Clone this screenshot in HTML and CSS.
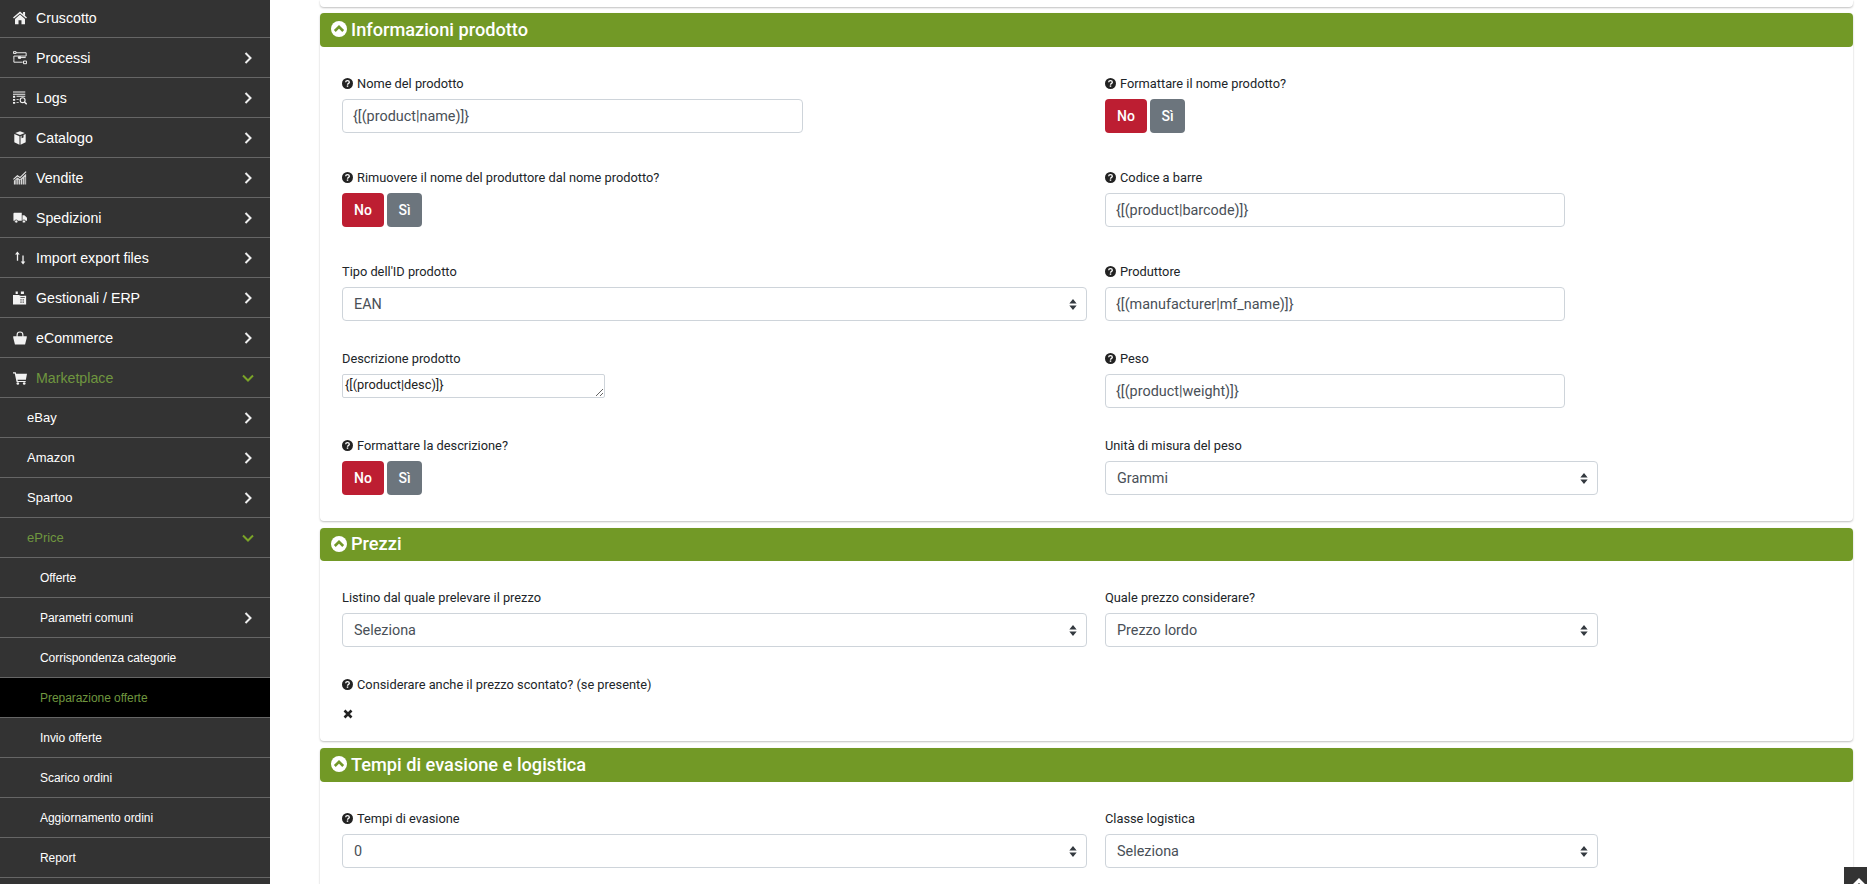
FILE: index.html
```html
<!DOCTYPE html>
<html lang="it">
<head>
<meta charset="utf-8">
<title>Preparazione offerte</title>
<link rel="stylesheet" href="styles.css">
</head>
<body>
<svg class="defs" width="0" height="0" aria-hidden="true">
  <symbol id="i-chev" viewBox="0 0 8 12"><path d="M1.500 1 6.500 6l-5 5" fill="none" stroke="currentColor" stroke-width="2"/></symbol>
  <symbol id="i-down" viewBox="0 0 12 8"><path d="M1 1.500 6 6.500l5-5" fill="none" stroke="currentColor" stroke-width="2"/></symbol>
  <symbol id="i-home" viewBox="0 0 16 16"><path fill="currentColor" d="M8 .5 16 7.500l-1.100 1.200L8 2.800 1.100 8.700 0 7.500zM11.500 1h2.300v4.300l-2.300-2zM2.300 9 8 4.100 13.700 9v6H9.700v-4.300H6.300V15H2.300z"/></symbol>
  <symbol id="i-proc" viewBox="0 0 16 16"><g fill="none" stroke="currentColor" stroke-width="1.100"><path d="M.5 .8h3v2h-3zM3.500 2h11.500v3.800H1v4v3h10"/><path d="M5.500 7.500h9M12 11.500h3.500v3H12z"/></g><path fill="currentColor" d="M6 6h3v3H6z"/></symbol>
  <symbol id="i-logs" viewBox="0 0 16 16"><g fill="currentColor"><path d="M0 .5h14v1.200H0zM0 3h14v1.200H0zM0 5.500h2.500v2.200H0zM0 9h2.500v2.200H0zM0 12.500h2.500v2.200H0zM4 5.500h10v1H4zM4 9h2.500v1H4zM4 12.500h2.500v1H4z"/></g><circle cx="11" cy="10.500" r="2.800" fill="none" stroke="currentColor" stroke-width="1.300"/><path d="m13 12.500 2.700 2.700" stroke="currentColor" stroke-width="1.700"/></symbol>
  <symbol id="i-cube" viewBox="0 0 16 16"><path fill="currentColor" d="M8 .3l5.500 2L8 4.500l-5.500-2.200zM1.500 3.500 7.400 6v9.700L1.500 12.800zM14.500 3.500V12.800L8.600 15.700V6z"/><path fill="#333" d="M9.800 5.200l2.200-.9v3l-2.200.9z"/></symbol>
  <symbol id="i-chart" viewBox="0 0 16 16"><path fill="#d8d8d8" d="M1 11l4-3.500 3 2L15 3v12.500H1z"/><path d="M.5 9.500l4.500-4 3 2L15 .8" fill="none" stroke="#e8e8e8" stroke-width="1.300"/><path d="M3.500 10v6M6 10v6M8.500 10v6M11 9v7M13.500 7v9" stroke="#333" stroke-width=".8"/></symbol>
  <symbol id="i-truck" viewBox="0 0 16 16"><path fill="currentColor" d="M.5 3a1 1 0 0 1 1-1H10v9H.5zM10.800 4.800H13l3 3V11h-5.200z"/><circle cx="3.700" cy="12" r="1.800" fill="currentColor" stroke="#333" stroke-width=".8"/><circle cx="12.500" cy="12" r="1.800" fill="currentColor" stroke="#333" stroke-width=".8"/></symbol>
  <symbol id="i-updown" viewBox="0 0 16 16"><path fill="currentColor" d="M5 .5 7.800 4H5.900v7H4.400V4H2.300zM11.500 15.500 8.800 12h1.900V5h1.500v7h1.900z"/></symbol>
  <symbol id="i-erp" viewBox="0 0 16 16"><path fill="currentColor" d="M3 .5h2.500v3H3zM9 .5h3.500v3H9zM0 4.500h7.500V5.500H15V15.500H0z"/><path fill="#333" d="M8.500 7h5v1h-5zM8.500 9.500h1.300v1.300H8.500zM11 9.500h1.300v1.300H11zM8.500 12h1.300v1.300H8.500zM11 12h1.300v1.300H11zM9 4h3.500v1H9z"/></symbol>
  <symbol id="i-basket" viewBox="0 0 16 16"><path fill="currentColor" d="M.3 6h15.400v1.800L13.800 15.500H2.200L.3 7.800z"/><path d="M4.700 7.500V4.500a3.300 3.300 0 0 1 6.600 0v3" fill="none" stroke="currentColor" stroke-width="1.300"/></symbol>
  <symbol id="i-cart" viewBox="0 0 16 16"><path fill="currentColor" d="M0 1.500h3.200l.4 1.700H16l-1.300 6.800H5.200l.3 1.300H14.500v1.200H4.100L2 2.800H0z"/><circle cx="5.500" cy="14.300" r="1.500" fill="currentColor"/><circle cx="12.800" cy="14.300" r="1.500" fill="currentColor"/></symbol>
  <symbol id="i-help" viewBox="0 0 12 12"><circle cx="6" cy="6" r="6" fill="#222"/><path d="M4 4.700Q4 2.900 6 2.900T8 4.600C8 5.900 6 5.800 6 7.300" fill="none" stroke="#fff" stroke-width="1.400"/><path d="M5.200 8.100h1.600v1.500H5.200z" fill="#fff"/></symbol>
  <symbol id="i-collapse" viewBox="0 0 16 16"><circle cx="8" cy="8" r="8" fill="#fff"/><path d="M3.800 10 8 5.800l4.200 4.200" fill="none" stroke="#72992a" stroke-width="2.600"/></symbol>
  <symbol id="i-x" viewBox="0 0 10 10"><path d="M1.500 1.500l7 7M8.500 1.500l-7 7" stroke="#222" stroke-width="2.600"/></symbol>
</svg>

<div class="app">
  <nav class="sidebar">
    <a class="item first lvl1"><svg class="ico"><use href="#i-home"/></svg><span>Cruscotto</span></a>
    <a class="item lvl1"><svg class="ico"><use href="#i-proc"/></svg><span>Processi</span><svg class="chev"><use href="#i-chev"/></svg></a>
    <a class="item lvl1"><svg class="ico"><use href="#i-logs"/></svg><span>Logs</span><svg class="chev"><use href="#i-chev"/></svg></a>
    <a class="item lvl1"><svg class="ico"><use href="#i-cube"/></svg><span>Catalogo</span><svg class="chev"><use href="#i-chev"/></svg></a>
    <a class="item lvl1"><svg class="ico"><use href="#i-chart"/></svg><span>Vendite</span><svg class="chev"><use href="#i-chev"/></svg></a>
    <a class="item lvl1"><svg class="ico"><use href="#i-truck"/></svg><span>Spedizioni</span><svg class="chev"><use href="#i-chev"/></svg></a>
    <a class="item lvl1"><svg class="ico"><use href="#i-updown"/></svg><span>Import export files</span><svg class="chev"><use href="#i-chev"/></svg></a>
    <a class="item lvl1"><svg class="ico"><use href="#i-erp"/></svg><span>Gestionali / ERP</span><svg class="chev"><use href="#i-chev"/></svg></a>
    <a class="item lvl1"><svg class="ico"><use href="#i-basket"/></svg><span>eCommerce</span><svg class="chev"><use href="#i-chev"/></svg></a>
    <a class="item lvl1 open"><svg class="ico"><use href="#i-cart"/></svg><span>Marketplace</span><svg class="down"><use href="#i-down"/></svg></a>
    <a class="item lvl2"><span>eBay</span><svg class="chev"><use href="#i-chev"/></svg></a>
    <a class="item lvl2"><span>Amazon</span><svg class="chev"><use href="#i-chev"/></svg></a>
    <a class="item lvl2"><span>Spartoo</span><svg class="chev"><use href="#i-chev"/></svg></a>
    <a class="item lvl2 open"><span>ePrice</span><svg class="down"><use href="#i-down"/></svg></a>
    <a class="item lvl3"><span>Offerte</span></a>
    <a class="item lvl3"><span>Parametri comuni</span><svg class="chev"><use href="#i-chev"/></svg></a>
    <a class="item lvl3"><span>Corrispondenza categorie</span></a>
    <a class="item lvl3 active"><span>Preparazione offerte</span></a>
    <a class="item lvl3"><span>Invio offerte</span></a>
    <a class="item lvl3"><span>Scarico ordini</span></a>
    <a class="item lvl3"><span>Aggiornamento ordini</span></a>
    <a class="item lvl3"><span>Report</span></a>
  </nav>

  <main class="main">
    <div class="card-stub"></div>

    <section class="card">
      <h2 class="card-head"><svg class="collapse"><use href="#i-collapse"/></svg>Informazioni prodotto</h2>
      <div class="card-body form-grid">
        <div class="field tall">
          <label class="lab"><svg class="help"><use href="#i-help"/></svg>Nome del prodotto</label>
          <input class="ctl w-left" type="text" value="{[(product|name)]}">
        </div>
        <div class="field tall">
          <label class="lab"><svg class="help"><use href="#i-help"/></svg>Formattare il nome prodotto?</label>
          <div class="toggle"><button class="btn no">No</button><button class="btn si">Sì</button></div>
        </div>
        <div class="field tall">
          <label class="lab"><svg class="help"><use href="#i-help"/></svg>Rimuovere il nome del produttore dal nome prodotto?</label>
          <div class="toggle"><button class="btn no">No</button><button class="btn si">Sì</button></div>
        </div>
        <div class="field tall">
          <label class="lab"><svg class="help"><use href="#i-help"/></svg>Codice a barre</label>
          <input class="ctl w-right" type="text" value="{[(product|barcode)]}">
        </div>
        <div class="field">
          <label class="lab">Tipo dell'ID prodotto</label>
          <select class="ctl sel"><option>EAN</option></select>
        </div>
        <div class="field">
          <label class="lab"><svg class="help"><use href="#i-help"/></svg>Produttore</label>
          <input class="ctl w-right" type="text" value="{[(manufacturer|mf_name)]}">
        </div>
        <div class="field">
          <label class="lab">Descrizione prodotto</label>
          <textarea class="area" rows="1">{[(product|desc)]}</textarea>
        </div>
        <div class="field">
          <label class="lab"><svg class="help"><use href="#i-help"/></svg>Peso</label>
          <input class="ctl w-right" type="text" value="{[(product|weight)]}">
        </div>
        <div class="field last">
          <label class="lab"><svg class="help"><use href="#i-help"/></svg>Formattare la descrizione?</label>
          <div class="toggle"><button class="btn no">No</button><button class="btn si">Sì</button></div>
        </div>
        <div class="field last">
          <label class="lab">Unità di misura del peso</label>
          <select class="ctl sel"><option>Grammi</option></select>
        </div>
      </div>
    </section>

    <section class="card">
      <h2 class="card-head short"><svg class="collapse"><use href="#i-collapse"/></svg>Prezzi</h2>
      <div class="card-body form-grid tight">
        <div class="field">
          <label class="lab">Listino dal quale prelevare il prezzo</label>
          <select class="ctl sel"><option>Seleziona</option></select>
        </div>
        <div class="field">
          <label class="lab">Quale prezzo considerare?</label>
          <select class="ctl sel"><option>Prezzo lordo</option></select>
        </div>
        <div class="field last wide">
          <label class="lab"><svg class="help"><use href="#i-help"/></svg>Considerare anche il prezzo scontato? (se presente)</label>
          <svg class="xmark"><use href="#i-x"/></svg>
        </div>
      </div>
    </section>

    <section class="card">
      <h2 class="card-head"><svg class="collapse"><use href="#i-collapse"/></svg>Tempi di evasione e logistica</h2>
      <div class="card-body form-grid">
        <div class="field">
          <label class="lab"><svg class="help"><use href="#i-help"/></svg>Tempi di evasione</label>
          <select class="ctl sel"><option>0</option></select>
        </div>
        <div class="field">
          <label class="lab">Classe logistica</label>
          <select class="ctl sel"><option>Seleziona</option></select>
        </div>
      </div>
    </section>
  </main>
</div>

<a class="to-top"><svg viewBox="0 0 23 17"><path d="M7.500 21 15 13.500 22.500 21" fill="none" stroke="#fff" stroke-width="3.500"/></svg></a>
</body>
</html>
```

FILE: styles.css
```css
* { box-sizing: border-box; }
html, body { margin: 0; height: 884px; overflow: hidden; background: #fff; }
body { font-family: Roboto, "Liberation Sans", sans-serif; font-size: 13px; color: #212529; }
.defs { position: absolute; }

.app { display: flex; height: 884px; overflow: hidden; }

/* sidebar */
.sidebar { flex: 0 0 270px; width: 270px; height: 884px; background: #333; font-family: "Liberation Sans", Arial, sans-serif; color: #fff; overflow: hidden; }
.item { display: flex; align-items: center; height: 40px; border-bottom: 1px solid #666; padding-right: 18px; }
.item.first { height: 38px; padding-bottom: 2px; }
.item span { flex: 1; }
.lvl1 { font-size: 14.2px; padding-left: 13px; }
.lvl2 { font-size: 13px; padding-left: 27px; }
.lvl3 { font-size: 12px; letter-spacing: -.05px; padding-left: 40px; }
.ico { flex: none; width: 14px; height: 14px; margin-right: 9px; color: #f2f2f2; }
.chev { flex: none; width: 8px; height: 12px; color: #eee; }
.down { flex: none; width: 12px; height: 8px; color: #7ba428; margin-right: -2px; }
.open span, .active span { color: #6f963f; }
.active { background: #000; }

/* main column */
.main { flex: 1; min-width: 0; padding: 0 14px 0 50px; }
.card-stub { height: 7px; background: #fff; border-radius: 0 0 4px 4px; box-shadow: 0 1px 2px rgba(0,0,0,.25); margin-bottom: 6px; }
.card { background: #fff; border-radius: 4px; box-shadow: 0 1px 2px rgba(0,0,0,.25); margin-bottom: 7px; }
.card-head { display: flex; align-items: center; height: 34px; margin: 0; padding: 0 0 2px 11px; background: #729926; border-radius: 4px; color: #fff; font-size: 18.2px; font-weight: 500; }
.card-head.short { height: 33px; }
.collapse { flex: none; width: 16px; height: 16px; margin-right: 4px; }
.card-body { padding: 27px 22px 26px; }
.card-body.tight { padding-bottom: 22px; }
.form-grid { display: grid; grid-template-columns: 745px 493px; column-gap: 18px; align-items: start; }

.field { margin-bottom: 28px; min-width: 0; }
.field.tall { margin-bottom: 35px; }
.field.last { margin-bottom: 0; }
.wide { grid-column: 1 / -1; }
.lab { display: flex; align-items: center; height: 25px; padding-bottom: 6px; font-size: 12.8px; color: #212529; }
.help { flex: none; width: 11px; height: 11px; margin-right: 4px; }

.ctl { display: block; height: 34px; padding: 1px 10px 0; border: 1px solid #ced4da; border-radius: 4px; background: #fff; color: #495057; font-family: Roboto, sans-serif; font-size: 14.4px; }
.w-left { width: 461px; }
.w-right { width: 460px; }
.sel { width: 100%; padding-left: 11px; appearance: none; -webkit-appearance: none; background-image: url("data:image/svg+xml,%3Csvg xmlns='http://www.w3.org/2000/svg' viewBox='0 0 8 12'%3E%3Cpath fill='%23343a40' d='M4 0 8 5H0zM4 12 0 7h8z'/%3E%3C/svg%3E"); background-repeat: no-repeat; background-position: right 9px center; background-size: 8px 11px; }
.area { display: block; width: 263px; height: 24px; padding: 2px; border: 1px solid #ced4da; border-radius: 2px; font-family: Roboto, sans-serif; font-size: 12.8px; color: #222; overflow: hidden; }

.toggle { display: flex; gap: 3px; }
.btn { height: 34px; border: 0; border-radius: 4px; color: #fff; font-family: Roboto, sans-serif; font-size: 14px; font-weight: 500; padding: 0; }
.no { width: 42px; background: #bd1e32; }
.si { width: 35px; background: #6c757d; }
.xmark { display: block; width: 10px; height: 10px; margin: 9px 0 0 1px; }

.to-top { position: fixed; right: 0; bottom: 0; width: 23px; height: 17px; background: #333; }
.to-top svg { display: block; width: 23px; height: 17px; }
```
